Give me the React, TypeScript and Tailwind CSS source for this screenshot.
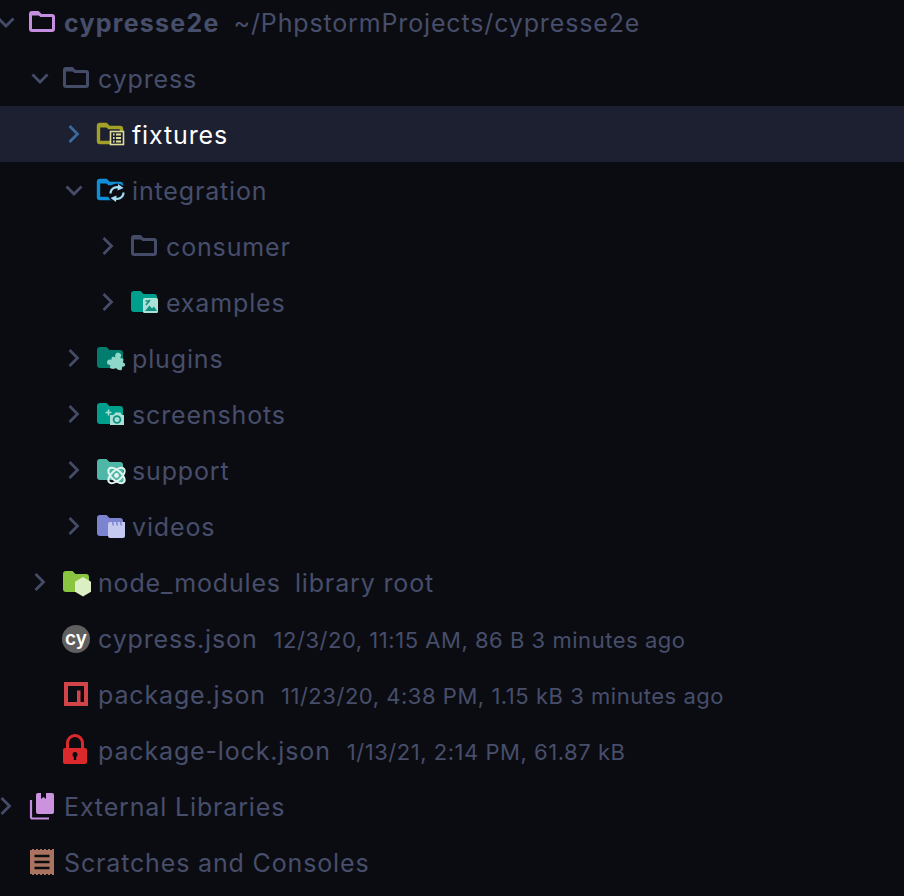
import type { ReactNode } from "react";

const FOLDER_FILL =
  "M1 8a3 3 0 0 1 3-3h6.5l3 3H24a3 3 0 0 1 3 3v12a3 3 0 0 1-3 3H4a3 3 0 0 1-3-3z";
const FOLDER_LINE =
  "M2.5 8A1.5 1.5 0 0 1 4 6.5h6l3 3h11A1.5 1.5 0 0 1 25.5 11v12a1.5 1.5 0 0 1-1.5 1.5H4A1.5 1.5 0 0 1 2.5 23z";

function Svg({ children }: { children: ReactNode }) {
  return (
    <svg width="34" height="34" viewBox="0 0 34 34" fill="none" className="shrink-0 overflow-visible">
      {children}
    </svg>
  );
}

function OutlineFolder({ color }: { color: string }) {
  return (
    <Svg>
      <path d={FOLDER_LINE} stroke={color} strokeWidth="3" />
      <path d="M2 6h8l3 3.500H2z" fill={color} />
    </Svg>
  );
}

const icons: Record<string, ReactNode> = {
  root: <OutlineFolder color="#c58ee0" />,
  plain: <OutlineFolder color="#454c68" />,
  fixtures: (
    <Svg>
      <path d={FOLDER_LINE} stroke="#a3a027" strokeWidth="3.400" />
      <path d="M2 6h8l3 3.500H2z" fill="#a3a027" />
      <rect x="14.500" y="13.500" width="13" height="13" fill="#1c2030" stroke="#dfdd9a" strokeWidth="1.600" />
      <path d="M17 16.500h1.600M17 20h1.600M17 23.500h1.600M20 16.500h5M20 20h5M20 23.500h5" stroke="#dfdd9a" strokeWidth="2" />
    </Svg>
  ),
  integration: (
    <Svg>
      <path d={FOLDER_LINE} stroke="#0f8fd8" strokeWidth="3.400" />
      <path d="M2 6h8l3 3.500H2z" fill="#0f8fd8" />
      <circle cx="21" cy="19" r="9.500" fill="#0b0c11" />
      <path d="M14.500 19.500a6.500 6.500 0 0 1 10.500-5M27.500 18.500a6.500 6.500 0 0 1-10.500 5" stroke="#a5dcf7" strokeWidth="2.200" />
      <path d="M22 10l5.500 4-6 2.500zM20 28l-5.500-4 6-2.500z" fill="#a5dcf7" />
    </Svg>
  ),
  examples: (
    <Svg>
      <path d={FOLDER_FILL} fill="#009e8c" />
      <rect x="13" y="12" width="15" height="15" rx="1.500" fill="#a9e0d8" />
      <path d="M15 25l4.500-5.500 2.500 3 2-2 3 4.500z" fill="#0f8f80" />
      <path d="M15.500 15h4M20 14l-4 5" stroke="#0f8f80" strokeWidth="1.500" />
    </Svg>
  ),
  plugins: (
    <Svg>
      <path d={FOLDER_FILL} fill="#007d6c" />
      <g transform="rotate(10 21 20)">
        <rect x="15" y="15.500" width="12" height="12" rx="1" fill="#8fd7c9" />
        <circle cx="21" cy="13.500" r="3" fill="#8fd7c9" />
        <circle cx="14" cy="21.500" r="2.800" fill="#8fd7c9" />
        <circle cx="27.500" cy="21.500" r="2" fill="#8fd7c9" />
        <circle cx="21" cy="28.500" r="2.200" fill="#0b0c11" />
      </g>
    </Svg>
  ),
  screenshots: (
    <Svg>
      <path d={FOLDER_FILL} fill="#009e8c" />
      <path d="M14 27V17h3.500l2-2.500h5L26 17h2v10H14z" fill="#a9e0d8" />
      <circle cx="21" cy="21.500" r="3.400" stroke="#0f8f80" strokeWidth="1.800" />
      <path d="M12.500 11.500v6M9.500 14.500h6" stroke="#a9e0d8" strokeWidth="1.600" />
    </Svg>
  ),
  support: (
    <Svg>
      <path d={FOLDER_FILL} fill="#4fb7a7" />
      <ellipse cx="20.500" cy="21.500" rx="10" ry="5" transform="rotate(42 20.500 21.500)" fill="#4fb7a7" stroke="#e3f5f1" strokeWidth="2" />
      <ellipse cx="20.500" cy="21.500" rx="10" ry="5" transform="rotate(-42 20.500 21.500)" stroke="#e3f5f1" strokeWidth="2" />
      <circle cx="20.500" cy="21.500" r="2.400" fill="#e3f5f1" />
    </Svg>
  ),
  videos: (
    <Svg>
      <path d={FOLDER_FILL} fill="#7c83cf" />
      <path d="M12 14a2 2 0 0 1 2-2h15v14a2 2 0 0 1-2 2H14a2 2 0 0 1-2-2z" fill="#c6c9ef" />
      <path d="M16.500 12l1 3.500M20.500 12l1 3.500M24.500 12l1 3.500" stroke="#7c83cf" strokeWidth="1.400" />
    </Svg>
  ),
  nodeModules: (
    <Svg>
      <path d={FOLDER_FILL} fill="#8ac542" />
      <path d="M21 11l8 4.700v10l-8 4.700-8-4.700v-10z" fill="#dcefc4" />
    </Svg>
  ),
  npm: (
    <Svg>
      <path d="M2 4h24v24H2zM6 8v16h9V12.500h3.500V24H22V8z" fill="#d1444a" fillRule="evenodd" />
    </Svg>
  ),
  lock: (
    <Svg>
      <path d="M5.500 15V9a7.500 7.500 0 0 1 15 0v6" stroke="#dc2a2c" strokeWidth="3" />
      <rect x="1" y="14" width="24" height="16" rx="2" fill="#dc2a2c" />
      <circle cx="13" cy="20.500" r="2.500" fill="#0b0c11" />
      <rect x="11.800" y="20.500" width="2.400" height="5.500" fill="#0b0c11" />
    </Svg>
  ),
  library: (
    <Svg>
      <path d="M3 10v17a1.500 1.500 0 0 0 1.500 1.500H21" stroke="#c58ee0" strokeWidth="2.200" />
      <path d="M10 3h3v6l2.500-2 2.500 2V3h6a2 2 0 0 1 2 2v17a2 2 0 0 1-2 2H10a2 2 0 0 1-2-2V5a2 2 0 0 1 2-2z" fill="#cb92de" />
    </Svg>
  ),
  scratches: (
    <Svg>
      <path d="M2 3h24v26H2z" fill="#a9735f" />
      <path d="M2 3.500h24M2 28.500h24" stroke="#0b0c11" strokeWidth="1" strokeDasharray="2 2" />
      <path d="M6.500 10h15M6.500 16h15M6.500 22h15" stroke="#0b0c11" strokeWidth="2.500" />
    </Svg>
  ),
};

function CyBadge() {
  return (
    <span className="mr-[8px] flex h-[28px] w-[28px] shrink-0 items-center justify-center rounded-full bg-[#5f5f5f] text-[19px] leading-none font-semibold text-white">
      <span className="relative top-[-1px]">cy</span>
    </span>
  );
}

type Row = {
  depth: string;
  open?: boolean;
  leaf?: boolean;
  icon: string;
  name: string;
  meta?: string;
  metaGap?: string;
  bold?: boolean;
  selected?: boolean;
};

const rows: Row[] = [
  { depth: "pl-0", open: true, icon: "root", name: "cypresse2e", bold: true, meta: "~/PhpstormProjects/cypresse2e", metaGap: "ml-[14px]" },
  { depth: "pl-[34px]", open: true, icon: "plain", name: "cypress" },
  { depth: "pl-[68px]", icon: "fixtures", name: "fixtures", selected: true },
  { depth: "pl-[68px]", open: true, icon: "integration", name: "integration" },
  { depth: "pl-[102px]", icon: "plain", name: "consumer" },
  { depth: "pl-[102px]", icon: "examples", name: "examples" },
  { depth: "pl-[68px]", icon: "plugins", name: "plugins" },
  { depth: "pl-[68px]", icon: "screenshots", name: "screenshots" },
  { depth: "pl-[68px]", icon: "support", name: "support" },
  { depth: "pl-[68px]", icon: "videos", name: "videos" },
  { depth: "pl-[34px]", icon: "nodeModules", name: "node_modules", meta: "library root", metaGap: "ml-[14px]" },
  { depth: "pl-[34px]", leaf: true, icon: "cy", name: "cypress.json", meta: "12/3/20, 11:15 AM, 86 B 3 minutes ago", metaGap: "ml-4" },
  { depth: "pl-[34px]", leaf: true, icon: "npm", name: "package.json", meta: "11/23/20, 4:38 PM, 1.15 kB 3 minutes ago", metaGap: "ml-[15px]" },
  { depth: "pl-[34px]", leaf: true, icon: "lock", name: "package-lock.json", meta: "1/13/21, 2:14 PM, 61.87 kB", metaGap: "ml-4" },
  { depth: "pl-0", icon: "library", name: "External Libraries" },
  { depth: "pl-0", leaf: true, icon: "scratches", name: "Scratches and Consoles" },
];

function Chevron({ open, selected }: { open?: boolean; selected?: boolean }) {
  const color = selected ? "#3d6a9e" : "#454c68";
  return (
    <svg width="28" height="34" viewBox="0 0 28 34" fill="none" className="shrink-0 overflow-visible">
      <path
        d={open ? "M-1.500 12.500l7.500 7.500 7.500-7.500" : "M1.500 8l8 8-8 8"}
        stroke={color}
        strokeWidth="2.800"
      />
    </svg>
  );
}

function TreeRow({ row }: { row: Row }) {
  return (
    <div
      className={`flex h-14 items-center whitespace-nowrap pt-[2px] ${row.depth} ${row.selected ? "bg-[#1c2030]" : ""}`}
    >
      {row.leaf ? (
        <span className="w-7 shrink-0" />
      ) : (
        <Chevron open={row.open} selected={row.selected} />
      )}
      {row.icon === "cy" ? <CyBadge /> : <span className="mr-[2px] flex">{icons[row.icon]}</span>}
      <span
        className={`pt-[2px] text-[25px] ${row.bold ? "font-bold tracking-[0.05em]" : "tracking-[0.034em]"} ${row.selected ? "text-white" : "text-[#474e6b]"}`}
      >
        {row.name}
      </span>
      {row.meta && (
        <span
          className={`${row.metaGap} pt-[2px] text-[#474e6b] ${row.bold || row.icon === "nodeModules" ? "text-[25px] tracking-[0.034em]" : "text-[22px] tracking-[0.024em]"}`}
        >
          {row.meta}
        </span>
      )}
    </div>
  );
}

export default function App() {
  return (
    <div className="h-[896px] w-[904px] overflow-hidden bg-[#0b0c11] font-['Inter',sans-serif]">
      <div className="mt-[-6px] flex flex-col">
        {rows.map((row) => (
          <TreeRow key={row.name} row={row} />
        ))}
      </div>
    </div>
  );
}
